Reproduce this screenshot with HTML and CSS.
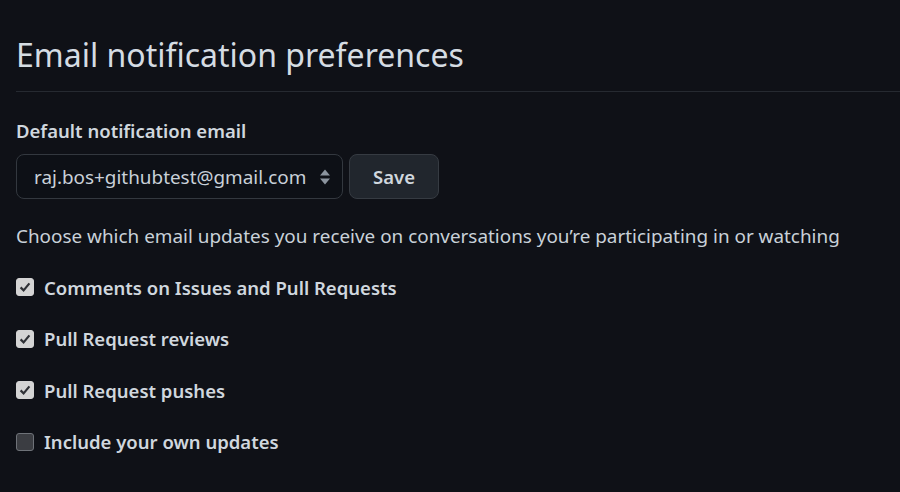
FILE: index.html
```html
<!DOCTYPE html>
<html>
<head>
<meta charset="utf-8">
<link rel="stylesheet" href="styles.css">
</head>
<body>
<div class="page">
  <div class="subhead">
    <h2 class="subhead-heading">Email notification preferences</h2>
  </div>
  <div class="form-group">
    <div class="form-label">Default notification email</div>
    <div class="form-row">
      <div class="select">
        <span class="select-value">raj.bos+githubtest@gmail.com</span>
        <svg class="select-caret" width="12" height="18" viewBox="0 0 12 18"><path d="M6 1.5 L11 7.5 H1 Z M6 16.5 L11 10.5 H1 Z" fill="#8b949e"/></svg>
      </div>
      <button class="btn">Save</button>
    </div>
  </div>
  <p class="note">Choose which email updates you receive on conversations you’re participating in or watching</p>
  <ul class="checks">
    <li class="check-item"><span class="box checked"><svg width="14" height="14" viewBox="0 0 14 14"><path d="M2.6 7.4 L5.6 10.4 L11.4 3.4" fill="none" stroke="#2f3136" stroke-width="2.2"/></svg></span><span class="check-label">Comments on Issues and Pull Requests</span></li>
    <li class="check-item"><span class="box checked"><svg width="14" height="14" viewBox="0 0 14 14"><path d="M2.6 7.4 L5.6 10.4 L11.4 3.4" fill="none" stroke="#2f3136" stroke-width="2.2"/></svg></span><span class="check-label">Pull Request reviews</span></li>
    <li class="check-item"><span class="box checked"><svg width="14" height="14" viewBox="0 0 14 14"><path d="M2.6 7.4 L5.6 10.4 L11.4 3.4" fill="none" stroke="#2f3136" stroke-width="2.2"/></svg></span><span class="check-label">Pull Request pushes</span></li>
    <li class="check-item"><span class="box"></span><span class="check-label">Include your own updates</span></li>
  </ul>
</div>
</body>
</html>
```

FILE: styles.css
```css
html, body {
  margin: 0;
  padding: 0;
  background: #0f1117;
}
body {
  font-family: "Noto Sans", "Open Sans", sans-serif;
  color: #c9d1d9;
  overflow: hidden;
}
.page {
  padding: 0 0 0 16px;
}
.subhead {
  padding-top: 32px;
  padding-bottom: 13px;
  border-bottom: 1.5px solid #262a31;
}
.subhead-heading {
  margin: 0;
  font-size: 32px;
  line-height: 46px;
  font-weight: 400;
  color: #d5dce3;
}
.form-group {
  margin-top: 27px;
}
.form-label {
  font-size: 18.5px;
  font-weight: 600;
  line-height: 24px;
  color: #d0d7de;
}
.form-row {
  display: flex;
  gap: 6px;
  margin-top: 11px;
}
.select {
  box-sizing: border-box;
  width: 327px;
  height: 45px;
  border: 1.5px solid #33383f;
  border-radius: 8px;
  background: #0d1016;
  display: flex;
  align-items: center;
  padding: 0 11px 0 17px;
  justify-content: space-between;
}
.select-value {
  font-size: 18.9px;
  color: #c9d1d9;
}
.btn {
  box-sizing: border-box;
  width: 90px;
  height: 45px;
  border: 1.5px solid #363b42;
  border-radius: 8px;
  background: #21262d;
  color: #d0d7de;
  font-family: inherit;
  font-size: 18.5px;
  font-weight: 600;
  padding: 0;
}
.note {
  margin: 24px 0 0;
  font-size: 18.9px;
  line-height: 26px;
  color: #c9d1d9;
}
.checks {
  list-style: none;
  margin: 25px 0 0;
  padding: 0;
  display: flex;
  flex-direction: column;
  gap: 25.6px;
}
.check-item {
  display: flex;
  align-items: center;
  gap: 10px;
  height: 26px;
}
.box {
  box-sizing: border-box;
  width: 18px;
  height: 18px;
  border-radius: 3px;
  border: 1.5px solid #6e7278;
  background: #3b3d42;
  display: flex;
  align-items: center;
  justify-content: center;
}
.box.checked {
  background: #d4d4d4;
  border-color: #d4d4d4;
}
.check-label {
  font-size: 18.5px;
  font-weight: 600;
  color: #d0d7de;
}
```
